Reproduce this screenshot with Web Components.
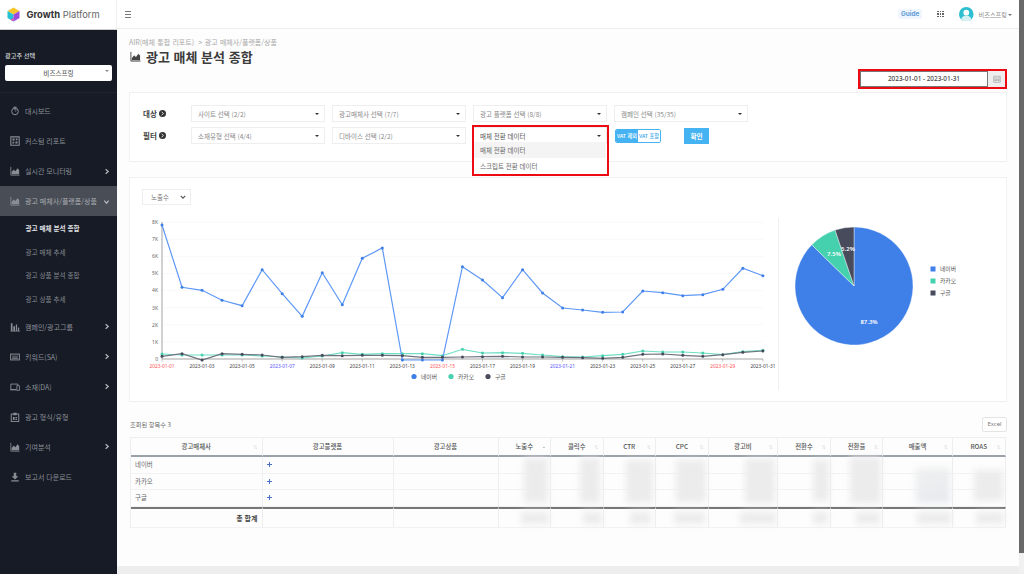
<!DOCTYPE html>
<html lang="ko">
<head>
<meta charset="utf-8">
<title>Growth Platform</title>
<style>
  html, body { margin: 0; height: 100%; overflow: hidden; background: #fff; }
  body { font-family: "Noto Sans CJK KR", "Noto Sans", sans-serif; color: #444; }
</style>
</head>
<body>
<app-shell>
  <side-bar slot="side">
    <nav-item icon="dash">대시보드</nav-item>
    <nav-item icon="report">커스텀 리포트</nav-item>
    <nav-item icon="area" arrow="right">실시간 모니터링</nav-item>
    <nav-item icon="area" arrow="down" open>광고 매체사/플랫폼/상품</nav-item>
    <nav-sub active>광고 매체 분석 종합</nav-sub>
    <nav-sub>광고 매체 추세</nav-sub>
    <nav-sub>광고 상품 분석 종합</nav-sub>
    <nav-sub>광고 상품 추세</nav-sub>
    <nav-item icon="bars" arrow="right">캠페인/광고그룹</nav-item>
    <nav-item icon="keys" arrow="right">키워드(SA)</nav-item>
    <nav-item icon="device" arrow="right">소재(DA)</nav-item>
    <nav-item icon="clip">광고 형식/유형</nav-item>
    <nav-item icon="area" arrow="right">기여분석</nav-item>
    <nav-item icon="down">보고서 다운로드</nav-item>
  </side-bar>
  <top-bar slot="top"></top-bar>
  <page-head slot="main"></page-head>
  <filter-card slot="main"></filter-card>
  <chart-card slot="main">
    <line-chart slot="line"></line-chart>
    <pie-chart slot="pie"></pie-chart>
  </chart-card>
  <data-table slot="main"></data-table>
</app-shell>

<script>
(() => {
  const ICONS = {
    dash: '<circle cx="12" cy="13" r="8" fill="none" stroke="currentColor" stroke-width="2.4"/><path d="M12 2v8M8 3h8" stroke="currentColor" stroke-width="2.4"/><path d="M12 13l4-3" stroke="currentColor" stroke-width="2"/>',
    report: '<path d="M2 2h20v20H2z" fill="none" stroke="currentColor" stroke-width="2.6"/><path d="M6 6h5v5H6zM14 6h4v4h-4zM6 14h4v4H6zM13 13h5v5h-5z" fill="currentColor"/>',
    area: '<path d="M2 2v20h21" fill="none" stroke="currentColor" stroke-width="2"/><path d="M4 20v-5l5-6 4 4 5-7 4 4v10z" fill="currentColor"/><path d="M4 15l5-6 4 4 5-7 4 4" fill="none" stroke="#fff" stroke-opacity=".25" stroke-width="1.4"/>',
    bars: '<path d="M2 3h4v18H2zM8 10h4v11H8zM14 6h3v15h-3zM19 13h3v8h-3zM1 21h23v2H1z" fill="currentColor"/>',
    keys: '<rect x="1.5" y="5" width="21" height="14" fill="none" stroke="currentColor" stroke-width="2.4"/><path d="M5 9h14v2H5zM5 13h14v3H5z" fill="currentColor"/>',
    device: '<path d="M15 18H2V5h17v3" fill="none" stroke="currentColor" stroke-width="2.2"/><path d="M0 18h15v2H0z" fill="currentColor"/><rect x="16.5" y="9" width="6" height="11" fill="none" stroke="currentColor" stroke-width="2"/>',
    clip: '<rect x="3" y="5" width="18" height="18" fill="none" stroke="currentColor" stroke-width="2.4"/><path d="M8 2h8v6H8zM7 12h4v7H7zM13 12h4v3h-4zM13 17h4v2h-4z" fill="currentColor"/>',
    down: '<path d="M9 2h6v8h5l-8 8-8-8h5zM3 20h18v3H3z" fill="currentColor"/>'
  };

  class AppShell extends HTMLElement {
    constructor() {
      super();
      this.attachShadow({ mode: 'open' }).innerHTML = `
        <style>
          :host { display: grid; grid-template-columns: 117px 902px 5px; width: 1024px; height: 574px; overflow: hidden; }
          .main { display: flex; flex-direction: column; background: #fdfdfd; min-width: 0; }
          .body { flex: 1; padding: 0 12px; display: flex; flex-direction: column; }
          .foot { height: 8px; background: #eee; }
          .scroll { display: flex; flex-direction: column; }
          .thumb { height: 553px; background: #686868; }
          .rest { flex: 1; background: #f1f1f1; }
        </style>
        <slot name="side"></slot>
        <div class="main">
          <slot name="top"></slot>
          <div class="body"><slot name="main"></slot></div>
          <div class="foot"></div>
        </div>
        <div class="scroll"><div class="thumb"></div><div class="rest"></div></div>`;
    }
  }

  class SideBar extends HTMLElement {
    constructor() {
      super();
      this.attachShadow({ mode: 'open' }).innerHTML = `
        <style>
          :host { display: flex; flex-direction: column; background: #161b26; color: #a4a7ad; }
          .logo { height: 30px; box-sizing: border-box; background: #fff; border-bottom: 1px solid #ccc; border-right: 1px solid #eee; display: flex; align-items: center; padding-left: 7px; gap: 6.5px; color: #666; font: 400 9.4px Inter, sans-serif; }
          .logo b { font-weight: 700; color: #333; }
          .logo svg { width: 13px; height: 15px; }
          .adv { height: 63px; box-sizing: border-box; padding: 20px 5px 0; border-bottom: 1px solid #1f2430; }
          .adv label { display: block; height: 11px; line-height: 11px; font-size: 6.2px; font-weight: 500; color: #d8d9dc; }
          .pick { margin-top: 4px; height: 16px; box-sizing: border-box; background: #fff; border-radius: 2px; color: #666; font-size: 6.6px; font-weight: 500; line-height: 16px; text-align: center; position: relative; }
          .pick i { position: absolute; right: 3px; top: 5px; border: 2px solid transparent; border-top: 2.5px solid #888; }
          .menu { padding-top: 3px; display: flex; flex-direction: column; }
        </style>
        <div class="logo">
          <svg viewBox="0 0 26 30"><path d="M13 1l12 7-12 7L1 8z" fill="#f8c52c"/><path d="M1 8l12 7v14L1 22z" fill="#25c2d6"/><path d="M25 8L13 15v14l12-7z" fill="#9a4bdc"/><path d="M13 22v7l-6-3.5z" fill="#e84fb2"/></svg>
          <span><b>Growth</b> Platform</span>
        </div>
        <div class="adv"><label>광고주 선택</label><div class="pick">비즈스프링<i></i></div></div>
        <div class="menu"><slot></slot></div>`;
    }
  }

  class NavItem extends HTMLElement {
    constructor() {
      super();
      const arrow = this.getAttribute('arrow');
      const mark = arrow === 'right' ? 'M3 1.5L6 4 3 6.5' : arrow === 'down' ? 'M1.5 3L4 6l2.5-3' : '';
      this.attachShadow({ mode: 'open' }).innerHTML = `
        <style>
          :host { display: flex; align-items: center; height: 30px; padding: 0 0 0 10px; font-size: 7px; color: #8d9097; }
          :host([open]) { background: #494e56; color: #a9acb1; }
          svg.ic { width: 10px; height: 10px; margin-right: 5px; color: #8a8d94; flex: none; }
          .txt { flex: 1; white-space: nowrap; }
          svg.ar { width: 7px; height: 7px; margin-right: 7px; flex: none; }
        </style>
        <svg class="ic" viewBox="0 0 24 24">${ICONS[this.getAttribute('icon')]}</svg>
        <span class="txt"><slot></slot></span>
        ${mark ? `<svg class="ar" viewBox="0 0 8 8"><path d="${mark}" fill="none" stroke="#b5b7bb" stroke-width="1.4"/></svg>` : ''}`;
    }
  }

  class NavSub extends HTMLElement {
    constructor() {
      super();
      this.attachShadow({ mode: 'open' }).innerHTML = `
        <style>
          :host { display: block; height: 23.7px; line-height: 23.7px; padding-left: 25.5px; font-size: 6.6px; color: #85888f; white-space: nowrap; }
          :host([active]) { color: #e0e1e4; font-weight: 700; margin-top: 1px; }
        </style>
        <slot></slot>`;
    }
  }

  class TopBar extends HTMLElement {
    constructor() {
      super();
      this.attachShadow({ mode: 'open' }).innerHTML = `
        <style>
          :host { display: flex; align-items: center; height: 29px; box-sizing: border-box; background: #fff; border-bottom: 1px solid #eee; padding: 0 7px 0 8px; }
          .ham { width: 6px; height: 5px; border-top: 1px solid #777; border-bottom: 1px solid #777; position: relative; margin-right: auto; }
          .ham::after { content: ""; position: absolute; left: 0; right: 0; top: 2px; height: 1px; background: #777; }
          .guide { width: 24px; text-align: center; height: 10px; background: #eff6fd; color: #5f9ad6; font: 700 6.4px/10px Inter, sans-serif; border-radius: 2px; margin-right: 15px; }
          .apps { display: grid; grid-template-columns: repeat(3, 1.6px); gap: .8px; margin-right: 15.5px; }
          .apps i { height: 1.6px; background: #666; }
          .ava { width: 14.5px; height: 14.5px; margin-right: 5px; }
          .name { font-size: 6.2px; color: #888; }
          .car { border: 2px solid transparent; border-top: 2.5px solid #777; margin: 3px 0 0 1px; }
        </style>
        <div class="ham"></div>
        <span class="guide">Guide</span>
        <div class="apps">${'<i></i>'.repeat(9)}</div>
        <svg class="ava" viewBox="0 0 28 28"><circle cx="14" cy="14" r="14" fill="#2bbfd0"/><circle cx="14" cy="11" r="5.5" fill="#fff"/><path d="M4 24c2-6 6-7 10-7s8 1 10 7a14 14 0 0 1-20 0z" fill="#d6f1f3"/></svg>
        <span class="name">비즈스프링</span><i class="car"></i>`;
    }
  }

  class PageHead extends HTMLElement {
    constructor() {
      super();
      this.attachShadow({ mode: 'open' }).innerHTML = `
        <style>
          :host { display: block; height: 63px; box-sizing: border-box; padding-top: 8px; }
          .crumb { height: 10px; line-height: 10px; font-size: 7px; color: #a8a8a8; word-spacing: .3px; }
          h1 { margin: 0; height: 19px; line-height: 19px; font-size: 13px; font-weight: 700; color: #3c3c3c; display: flex; align-items: center; gap: 5px; padding-left: 1px; }
          h1 svg { width: 11px; height: 11px; color: #444; }
          date-range { margin: 3px 0 0 auto; }
        </style>
        <div class="crumb">AIR(매체 통합 리포트) &nbsp;&gt; 광고 매체사/플랫폼/상품</div>
        <h1><svg viewBox="0 0 24 24">${ICONS.area}</svg>광고 매체 분석 종합</h1>
        <date-range></date-range>`;
    }
  }

  class DateRange extends HTMLElement {
    constructor() {
      super();
      this.attachShadow({ mode: 'open' }).innerHTML = `
        <style>
          :host { display: flex; width: 149px; height: 20px; box-sizing: border-box; border: 2px solid #ee0a12; background: #fff; }
          .val { flex: 1; box-sizing: border-box; border: 1px solid #777; font: 500 6.4px/14px "Noto Sans", sans-serif; color: #444; text-align: center; }
          .btn { width: 17px; background: #eee; display: flex; align-items: center; justify-content: center; }
          svg { width: 8px; height: 8px; }
        </style>
        <div class="val">2023-01-01 - 2023-01-31</div>
        <div class="btn"><svg viewBox="0 0 16 16"><path d="M1.5 2.5h13v12h-13zM1.5 6h13M5 8.5v3.5M8 8.5v3.5M11 8.5v3.5M1.5 10h13" fill="none" stroke="#999" stroke-width="1.2"/></svg></div>`;
    }
  }

  class GSelect extends HTMLElement {
    constructor() {
      super();
      this.attachShadow({ mode: 'open' }).innerHTML = `
        <style>
          :host { display: flex; align-items: center; position: relative; height: 17px; box-sizing: border-box; background: #fff; border: 1px solid #eee; padding: 0 5px 0 6px; font-size: 6.5px; color: #888; white-space: nowrap; }
          :host([open]) { color: #555; }
          .t { flex: 1; }
          i { border: 2.2px solid transparent; border-top: 2.8px solid #333; margin-top: 3px; }
          .ring { display: none; position: absolute; left: -2px; right: -3px; top: -3px; height: 51px; box-sizing: border-box; border: 2px solid #ee0a12; z-index: 3; }
          .drop { display: none; position: absolute; left: 0; right: 0; top: 14px; background: #fff; z-index: 2; color: #666; }
          :host([open]) .ring, :host([open]) .drop { display: block; }
          .drop div { height: 16px; line-height: 16px; padding-left: 6px; }
          .drop div:first-child { background: #f4f4f4; }
        </style>
        <span class="t"><slot></slot></span><i></i>
        <div class="ring"></div>
        <div class="drop"><div>매체 전환 데이터</div><div>스크립트 전환 데이터</div></div>`;
    }
  }

  class FilterCard extends HTMLElement {
    constructor() {
      super();
      const dot = '<svg viewBox="0 0 16 16"><circle cx="8" cy="8" r="8" fill="#333"/><path d="M6 4l4 4-4 4" fill="none" stroke="#fff" stroke-width="2"/></svg>';
      this.attachShadow({ mode: 'open' }).innerHTML = `
        <style>
          :host { display: block; height: 70px; box-sizing: border-box; background: #fff; border: 1px solid #f0f0f0; padding: 12px 0 0 13px; }
          .grid { display: grid; grid-template-columns: 41px repeat(4, 134px); column-gap: 7px; row-gap: 5px; grid-template-rows: 17px 17px; }
          .grid > b { white-space: nowrap; display: flex; align-items: center; gap: 2px; font-size: 7.5px; font-weight: 700; color: #444; }
          b svg { width: 7px; height: 7px; }
          .acts { display: flex; align-items: center; }
          .tog { display: flex; width: 46px; height: 14px; box-sizing: border-box; margin-left: 1px; border: 1px solid #45b2f2; border-radius: 2px; font-size: 5.2px; line-height: 12px; text-align: center; overflow: hidden; white-space: nowrap; font-weight: 500; }
          .tog span { flex: 1; background: #45b2f2; color: #fff; }
          .tog span + span { background: #fff; color: #3aa6ea; }
          .ok { margin-left: 23px; width: 25px; height: 16px; line-height: 16px; background: #45b2f2; color: #fff; text-align: center; font-size: 6.6px; font-weight: 700; }
        </style>
        <div class="grid">
          <b>대상${dot}</b>
          <g-select>사이트 선택 (2/2)</g-select>
          <g-select>광고매체사 선택 (7/7)</g-select>
          <g-select>광고 플랫폼 선택 (8/8)</g-select>
          <g-select>캠페인 선택 (35/35)</g-select>
          <b>필터${dot}</b>
          <g-select>소재유형 선택 (4/4)</g-select>
          <g-select>디바이스 선택 (2/2)</g-select>
          <g-select open>매체 전환 데이터</g-select>
          <div class="acts">
            <div class="tog"><span>VAT 제외</span><span>VAT 포함</span></div>
            <div class="ok">확인</div>
          </div>
        </div>`;
    }
  }

  class ChartCard extends HTMLElement {
    constructor() {
      super();
      this.attachShadow({ mode: 'open' }).innerHTML = `
        <style>
          :host { display: block; margin-top: 15px; height: 225px; box-sizing: border-box; background: #fff; border: 1px solid #f0f0f0; padding: 11px 0 0 12px; }
          .sel { display: flex; align-items: center; justify-content: space-between; width: 49px; height: 16px; box-sizing: border-box; border: 1px solid #eee; padding: 0 4px 0 8px; font-size: 6.5px; color: #777; }
          .sel svg { width: 6px; height: 6px; }
          .row { display: flex; margin-left: -12px; align-items: flex-start; }
        </style>
        <div class="sel">노출수<svg viewBox="0 0 8 8"><path d="M1 2.5L4 5.5 7 2.5" fill="none" stroke="#555" stroke-width="1.5"/></svg></div>
        <div class="row"><slot name="line"></slot><slot name="pie"></slot></div>`;
    }
  }

  const NAVER = [225,287.3,290.3,300.3,305.7,269.7,293.7,316.3,272.7,304.7,258.3,248,360,360,360,266.7,280,297.7,269.7,293,308,310,312.3,312,291,292.7,295.7,294.7,289.3,268.3,275.7];
  const KAKAO = [354,355,355,355,355,356,357,358,356,352.7,354.3,353.7,353.7,353.7,355.7,349.3,353,352.7,353.3,355,356.7,357,355.7,354.3,351,352,352,353,354.7,351.7,350.3];
  const GOOGLE = [356.3,353.7,360,353.7,354.3,355,357.3,356.7,355.3,355.7,355.3,355.3,355.7,357.3,357.3,357,356.7,356.3,357,357,357.3,357.7,358.3,357.3,354.3,354,355.3,356.3,354.7,352.3,351];

  class LineChart extends HTMLElement {
    constructor() {
      super();
      const px = i => 162 + i * 20.03;
      const series = (ys, line, dot) => `
        <polyline points="${ys.map((y, i) => `${px(i)},${y}`).join(' ')}" fill="none" stroke="${line}" stroke-width="1.2"/>
        ${ys.map((y, i) => `<circle cx="${px(i)}" cy="${y}" r="1.5" fill="${dot}"/>`).join('')}`;
      let grid = '';
      for (let k = 0; k <= 8; k++) {
        const y = 359 - k * 17.1;
        if (k) grid += `<line x1="162" x2="763" y1="${y}" y2="${y}" stroke="#efefef" stroke-width=".6" stroke-dasharray="1 .6"/>`;
        grid += `<text x="158" y="${y + 1.8}" text-anchor="end" font-size="5" fill="#666">${k ? k + 'K' : '0'}</text>`;
      }
      const colors = { 0: '#f55', 6: '#55f', 14: '#f55', 20: '#55f', 28: '#f55' };
      let ticks = '';
      for (let i = 0; i <= 30; i += 2) {
        const d = `2023-01-${String(i + 1).padStart(2, '0')}`;
        ticks += `<line x1="${px(i)}" x2="${px(i)}" y1="359" y2="361.5" stroke="#999" stroke-width=".6"/>`;
        ticks += `<text x="${px(i)}" y="368" text-anchor="middle" font-size="4.8" fill="${colors[i] || '#444'}">${d}</text>`;
      }
      this.attachShadow({ mode: 'open' }).innerHTML = `
        <style>
          :host { display: block; width: 648px; height: 190px; }
          svg { display: block; width: 648px; height: 190px; font-family: "Noto Sans", "Noto Sans CJK KR", sans-serif; }
          .lg { font-family: "Noto Sans CJK KR", sans-serif; font-size: 5.8px; fill: #555; }
        </style>
        <svg viewBox="130 205 648 190">
          ${grid}
          <line x1="162" x2="162" y1="222" y2="359" stroke="#aaa" stroke-width="1.1"/>
          <line x1="162" x2="763" y1="359" y2="359" stroke="#999" stroke-width=".9"/>
          ${ticks}
          ${series(KAKAO, '#6ee0c4', '#45d1ae')}
          ${series(NAVER, '#5e98f6', '#3f7fe8')}
          ${series(GOOGLE, '#70737f', '#474b5c')}
          <circle cx="414" cy="376.5" r="2.6" fill="#3f7fe8"/><text class="lg" x="421" y="378.5">네이버</text>
          <circle cx="451" cy="376.5" r="2.6" fill="#45d1ae"/><text class="lg" x="458" y="378.5">카카오</text>
          <circle cx="488" cy="376.5" r="2.6" fill="#474b5c"/><text class="lg" x="495" y="378.5">구글</text>
        </svg>`;
    }
  }

  class PieChart extends HTMLElement {
    constructor() {
      super();
      const cx = 853, cy = 286, r = 59;
      const pt = pct => {
        const a = pct / 100 * 2 * Math.PI;
        return `${(cx + r * Math.sin(a)).toFixed(2)} ${(cy - r * Math.cos(a)).toFixed(2)}`;
      };
      const slice = (from, to, fill) => `<path d="M${cx} ${cy}L${pt(from)}A${r} ${r} 0 ${to - from > 50 ? 1 : 0} 1 ${pt(to)}Z" fill="${fill}" stroke="#fff" stroke-width=".4"/>`;
      const legend = (y, c, t) => `<rect x="929.5" y="${y - 2.5}" width="5" height="5" fill="${c}"/><text x="939" y="${y + 2}" font-size="5.8" fill="#555">${t}</text>`;
      this.attachShadow({ mode: 'open' }).innerHTML = `
        <style>
          :host { display: block; width: 228px; height: 172px; margin-top: 13px; border-left: 1px solid #f0f0f0; box-sizing: border-box; }
          svg { display: block; width: 227px; height: 172px; font-family: "Noto Sans CJK KR", sans-serif; }
          .p { font: 600 6px "Noto Sans", sans-serif; fill: #fff; text-anchor: middle; }
        </style>
        <svg viewBox="778 218 227 172">
          ${slice(0, 87.3, '#3f7fe8')}
          ${slice(87.3, 94.8, '#45d1ae')}
          ${slice(94.8, 100, '#474b5c')}
          <text class="p" x="868" y="324">87.3%</text>
          <text class="p" x="833" y="256">7.5%</text>
          <text class="p" x="847" y="250.5">5.2%</text>
          ${legend(269, '#3f7fe8', '네이버')}${legend(281, '#45d1ae', '카카오')}${legend(293, '#474b5c', '구글')}
        </svg>`;
    }
  }

  const COLS = [131.5, 131, 105, 52.5, 52.5, 52.5, 52.7, 69.3, 53, 52, 70, 52.7];
  const HEADS = ['광고매체사', '광고플랫폼', '광고상품', '노출수', '클릭수', 'CTR', 'CPC', '광고비', '전환수', '전환율', '매출액', 'ROAS'];
  // blurred figures, columns 4-12: body width/top/height/right gap, total width/right gap
  const MASKS = [
    [24, 1, 45, 3, 28, 2], [20, 1, 45, 3.5, 19, 1.5], [27, 3, 43, 3, 21, 5],
    [30, 3, 42, 3, 31, 4], [30, 2, 44, 3, 36, 2], [16, 3, 41, 2, 15, 3],
    [31, 0, 46, 2, 24, 3], [34, 11, 35, 3, 34, 2], [29, 13, 31, 3, 28, 2]
  ];

  class DataTable extends HTMLElement {
    constructor() {
      super();
      const cell = (r, c, cls, html = '') => `<div class="c ${cls}" style="grid-area:${r}/${c}">${html}</div>`;
      const sorter = i => i === 3 ? '<em class="s on">⌄</em>' : (i === 1 || i === 2 ? '' : '<em class="s">⇅</em>');
      const plus = '<svg viewBox="0 0 10 10"><path d="M4 0h2v4h4v2H6v4H4V6H0V4h4z" fill="#4a72c4"/></svg>';
      let cells = HEADS.map((h, i) => cell(1, i + 1, 'h', h + sorter(i))).join('');
      ['네이버', '카카오', '구글'].forEach((n, r) => {
        cells += cell(r + 2, 1, 'n', n) + cell(r + 2, 2, 'n', plus);
        for (let c = 3; c <= 12; c++) cells += cell(r + 2, c, '');
      });
      cells += cell(5, 1, 'tot t', '총 합계');
      for (let c = 2; c <= 12; c++) cells += cell(5, c, 'tot');
      const masks = MASKS.map((m, i) => `
        <div class="m${i === 7 ? ' g2' : ''}" style="grid-column:${i + 4};grid-row:2/5;width:${m[0]}px;margin-top:${m[1]}px;height:${m[2]}px;margin-right:${m[3]}px"></div>
        <div class="m f" style="grid-column:${i + 4};grid-row:5;width:${m[4]}px;margin-right:${m[5]}px"></div>`).join('');
      this.attachShadow({ mode: 'open' }).innerHTML = `
        <style>
          :host { display: block; margin-top: 15px; }
          .bar { display: flex; justify-content: space-between; align-items: flex-start; height: 20px; font-size: 6.2px; color: #666; }
          .bar span:first-child { line-height: 14px; padding-top: 1px; margin-left: 1px; }
          .xl { width: 25px; height: 15px; box-sizing: border-box; border: 1px solid #e4e4e4; border-radius: 2px; background: #fff; font: 6px/13px "Noto Sans", sans-serif; color: #777; text-align: center; }
          .g { display: grid; grid-template-columns: ${COLS.map(c => c + 'px').join(' ')}; grid-template-rows: 19px 16.5px 16.5px 16.5px 21.5px; margin-left: 1px; border: solid #eee; border-width: 1px 0 0 1px; width: max-content; font-size: 6.4px; color: #666; }
          .c { box-sizing: border-box; border-right: 1px solid #eee; border-bottom: 1px solid #f2f2f2; display: flex; align-items: center; position: relative; min-width: 0; }
          .h { justify-content: center; font-weight: 500; border-bottom: 2px solid #9aa1a8; color: #555; }
          .s { position: absolute; right: 4px; top: 5px; font: normal 5px/8px "DejaVu Sans", sans-serif; color: #ddd; }
          .s.on { color: #777; top: 4px; }
          .n { padding-left: 4px; }
          .n svg { width: 5px; height: 5px; }
          .tot { border-top: 2px solid #777; }
          .t { justify-content: flex-end; padding-right: 4px; font-weight: 700; font-size: 7px; color: #444; }
          .m { align-self: start; justify-self: end; background: #ececec; filter: blur(3px); }
          .g2 { background: linear-gradient(160deg, #f0f0f0, #e6eaee); }
          .f { height: 12px; margin-top: 5.5px; }
        </style>
        <div class="bar"><span>조회된 항목수 3</span><span class="xl">Excel</span></div>
        <div class="g">${cells}${masks}</div>`;
    }
  }

  customElements.define('app-shell', AppShell);
  customElements.define('side-bar', SideBar);
  customElements.define('nav-item', NavItem);
  customElements.define('nav-sub', NavSub);
  customElements.define('top-bar', TopBar);
  customElements.define('page-head', PageHead);
  customElements.define('date-range', DateRange);
  customElements.define('g-select', GSelect);
  customElements.define('filter-card', FilterCard);
  customElements.define('chart-card', ChartCard);
  customElements.define('line-chart', LineChart);
  customElements.define('pie-chart', PieChart);
  customElements.define('data-table', DataTable);
})();
</script>
</body>
</html>
